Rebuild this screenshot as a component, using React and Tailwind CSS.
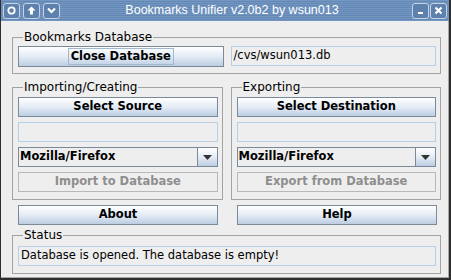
import React from "react";

const font = { fontFamily: '"DejaVu Sans", sans-serif' };

function TitleButton({ children }) {
  return (
    <div className="flex h-[16px] w-[17px] items-center justify-center rounded-[3px] border border-[#c3d4e8] bg-[#5d80ad]">
      {children}
    </div>
  );
}

function Button({ label, disabled = false }) {
  if (disabled) {
    return (
      <div className="flex h-[20px] items-center justify-center border border-[#b8b8b8] bg-[#eeeeee] text-[11.5px] font-bold text-[#8e8e8e]">
        {label}
      </div>
    );
  }
  return (
    <div className="flex h-[20px] items-center justify-center border border-[#7a8a99] bg-gradient-to-b from-[#ffffff] via-[#e4ecf5] to-[#bccde2] text-[11.5px] font-bold text-black">
      {label}
    </div>
  );
}

function Field({ text = "" }) {
  return (
    <div className="flex h-[20px] items-center border border-[#b8cfe5] bg-[#eeeeee] pl-[2px] text-[11.5px] text-black">
      {text}
    </div>
  );
}

function Combo() {
  return (
    <div className="flex h-[20px] border border-[#7a8a99] bg-[#eeeeee]">
      <div className="flex flex-1 items-center pl-[1px] text-[11.5px] font-bold text-black">
        Mozilla/Firefox
      </div>
      <div className="flex w-[20px] items-center justify-center border-l border-[#7a8a99] bg-gradient-to-b from-[#ffffff] via-[#e4ecf5] to-[#bccde2]">
        <svg width="9" height="5" viewBox="0 0 9 5">
          <path d="M0 0h9L4.5 5z" fill="#333333" />
        </svg>
      </div>
    </div>
  );
}

function Group({ title, className = "", children }) {
  return (
    <fieldset className={`border border-[#a3a3a3] pl-[5px] pr-[4px] ${className}`}>
      <legend className="ml-[5px] px-[1px] text-[12px] leading-[14px] text-black">
        {title}
      </legend>
      {children}
    </fieldset>
  );
}

export default function App() {
  return (
    <div
      className="flex h-[280px] w-[451px] flex-col border-b-2 border-l border-r-2 border-[#2e2e2e] bg-[#eeeeee]"
      style={font}
    >
      <div className="flex h-[21px] items-center bg-[repeating-linear-gradient(to_bottom,#7497c2_0px,#7497c2_1px,#6488b5_1px,#6488b5_2px)] px-[1px]">
        <div className="flex gap-[3px] pl-[1px]">
          <TitleButton>
            <svg width="9" height="9" viewBox="0 0 9 9">
              <circle cx="4.5" cy="4.5" r="3.2" stroke="white" strokeWidth="1.8" fill="none" />
            </svg>
          </TitleButton>
          <TitleButton>
            <svg width="9" height="9" viewBox="0 0 9 9">
              <path d="M4.5 0.5L8.5 4.5H6V8.5H3V4.5H0.5Z" fill="white" />
            </svg>
          </TitleButton>
          <TitleButton>
            <svg width="9" height="9" viewBox="0 0 9 9">
              <path d="M1 2.5L4.5 6L8 2.5" stroke="white" strokeWidth="2.2" fill="none" />
            </svg>
          </TitleButton>
        </div>
        <div
          className="mr-[8px] flex-1 text-center text-[12.5px] text-white"
          style={{ fontFamily: '"Liberation Sans", sans-serif' }}
        >
          Bookmarks Unifier v2.0b2 by wsun013
        </div>
        <div className="flex gap-[1px] pr-[1px]">
          <TitleButton>
            <svg width="9" height="9" viewBox="0 0 9 9">
              <rect x="2" y="6" width="5" height="2" fill="white" />
            </svg>
          </TitleButton>
          <TitleButton>
            <svg width="9" height="9" viewBox="0 0 9 9">
              <path d="M1.5 1.5L7.5 7.5M7.5 1.5L1.5 7.5" stroke="white" strokeWidth="2.2" />
            </svg>
          </TitleButton>
        </div>
      </div>

      <div className="flex flex-1 flex-col border-b border-r border-[#a8a8a8] pl-[11px] pr-[7px] pt-[9px]">
        <Group title="Bookmarks Database" className="pb-[6px]">
          <div className="mt-[2px] grid grid-cols-2 gap-[7px]">
            <div className="flex h-[21px] items-center justify-center border border-[#7a8a99] bg-gradient-to-b from-[#ffffff] via-[#e4ecf5] to-[#bccde2] text-[11.5px] font-bold text-black">
              <span className="border border-[#a3b8cc] px-[2px] leading-[15px]">Close Database</span>
            </div>
            <Field text="/cvs/wsun013.db" />
          </div>
        </Group>

        <div className="mt-[6px] grid grid-cols-2 gap-[8px]">
          <Group title="Importing/Creating" className="pb-[7px]">
            <div className="mt-[3px] flex flex-col gap-[5px]">
              <Button label="Select Source" />
              <Field />
              <Combo />
              <Button label="Import to Database" disabled />
            </div>
          </Group>
          <Group title="Exporting" className="pb-[7px]">
            <div className="mt-[3px] flex flex-col gap-[5px]">
              <Button label="Select Destination" />
              <Field />
              <Combo />
              <Button label="Export from Database" disabled />
            </div>
          </Group>
        </div>

        <div className="mt-[5px] grid grid-cols-2 gap-[19px] pl-[6px] pr-[4px]">
          <Button label="About" />
          <Button label="Help" />
        </div>

        <Group title="Status" className="mt-[3px] pb-[7px]">
          <div className="mt-[4px]">
            <Field text="Database is opened. The database is empty!" />
          </div>
        </Group>
      </div>
    </div>
  );
}
